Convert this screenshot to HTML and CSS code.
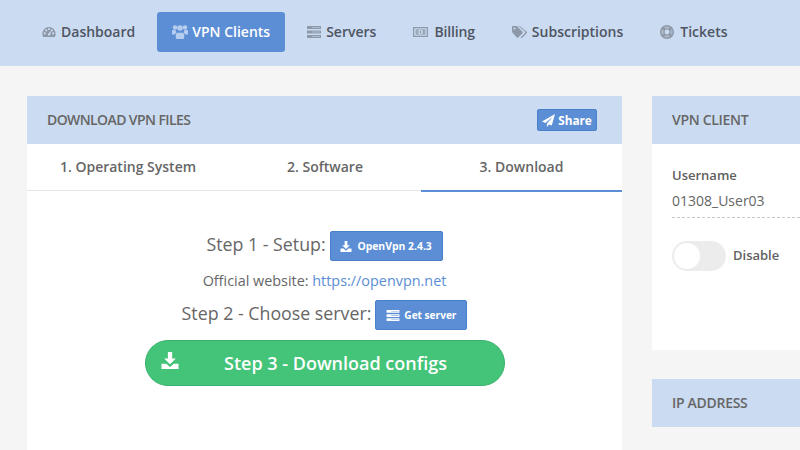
FILE: index.html
```html
<!DOCTYPE html>
<html lang="en">
<head>
<meta charset="UTF-8" />
<title>VPN Clients</title>
<link rel="stylesheet" href="styles.css">
</head>
<body>
<nav class="topnav">
    <a class="navitem" href="#">
        <svg class="navicon" viewBox="0 0 20 16"><path fill-rule="evenodd" d="M10 1a9.500 9.500 0 0 0-9.500 9.500c0 1.700.4 3.200 1.200 4.500h16.600c.8-1.300 1.200-2.800 1.200-4.500A9.500 9.500 0 0 0 10 1zM4 11.500a1.500 1.500 0 1 1 0-3 1.500 1.500 0 0 1 0 3zm2-4.300a1.500 1.500 0 1 1 0-3 1.500 1.500 0 0 1 0 3zm4-2a1.500 1.500 0 1 1 0-3 1.500 1.500 0 0 1 0 3zm1.300 7.800H8.700a2 2 0 0 1 .6-2.700l4.300-4.400-2.300 7.100zm2.700-5.800a1.500 1.500 0 1 1 0-3 1.500 1.500 0 0 1 0 3zm2 4.300a1.500 1.500 0 1 1 0-3 1.500 1.500 0 0 1 0 3z"/></svg>
        Dashboard
    </a>
    <a class="navitem active" href="#">
        <svg class="navicon icon-users" viewBox="0 0 16 14"><circle cx="3" cy="2.500" r="2.300"/><circle cx="13" cy="2.500" r="2.300"/><circle cx="8" cy="3" r="2.800"/><path d="M0 6c0-.6.400-1 1-1h2.800c-.2 1 .1 2 .8 2.700C3.600 8 3 8.800 2.900 9.500H1c-.6 0-1-.4-1-1zM16 6c0-.6-.4-1-1-1h-2.800c.2 1-.1 2-.8 2.700 1 .3 1.600 1.100 1.700 1.800H15c.6 0 1-.4 1-1z"/><path d="M3.800 10c0-1.200.8-2.300 2-2.300h4.400c1.200 0 2 1.100 2 2.300v2.400c0 .9-.7 1.600-1.600 1.600H5.400c-.9 0-1.600-.7-1.600-1.600z"/></svg>
        VPN Clients
    </a>
    <a class="navitem" href="#">
        <svg class="navicon" viewBox="0 0 14 12"><path d="M0 0h14v3H0zM0 4.500h14v3H0zM0 9h14v3H0z"/><path class="cut" d="M5 1h8v1H5zM5 5.500h8v1H5zM5 10h8v1H5z"/></svg>
        Servers
    </a>
    <a class="navitem icon-gap billing" href="#">
        <svg class="navicon icon-wide" viewBox="0 0 15 12"><path fill-rule="evenodd" d="M0 1h15v10H0zM1.200 2.200v7.600h12.600V2.200z"/><path fill-rule="evenodd" opacity=".75" d="M2.500 3.200h10v5.600h-10zM7.500 3.800a2.200 2.200 0 1 0 0 4.400 2.200 2.200 0 0 0 0-4.400z"/><path d="M6.800 4.800h1.300v2.500H6.800z"/></svg>
        Billing
    </a>
    <a class="navitem" href="#">
        <svg class="navicon icon-wide" viewBox="0 0 15 12"><path fill-rule="evenodd" d="M0 1c0-.6.400-1 1-1h3.800l5.700 5.800c.4.400.4 1 0 1.400l-4.300 4.400c-.4.400-1 .4-1.400 0L0 6zM2.500 3.500a1 1 0 1 0 0-2 1 1 0 0 0 0 2z"/><path d="M6.500 0h1.300l6.800 5.800c.5.400.5 1 0 1.400l-4.400 4.500c-.4.400-1 .4-1.400 0l-.2-.2 4.300-4.400c.4-.4.400-1.100 0-1.500z"/></svg>
        Subscriptions
    </a>
    <a class="navitem icon-gap" href="#">
        <svg class="navicon icon-buoy" viewBox="0 0 14 14"><circle class="buoy-band" cx="7" cy="7" r="5"/><circle class="buoy-edge" cx="7" cy="7" r="6.400"/><circle class="buoy-edge" cx="7" cy="7" r="3"/><path class="buoy-cross" d="M2.500 2.500l2.400 2.400M11.500 2.500L9.100 4.900M2.500 11.500l2.400-2.400M11.500 11.500L9.100 9.100"/></svg>
        Tickets
    </a>
</nav>

<main class="columns">
    <section class="card">
        <header class="cardhead">
            <h2 class="tight">DOWNLOAD VPN FILES</h2>
            <a class="btn btn-share" href="#">
                <svg class="btnicon" viewBox="0 0 16 16"><path d="M16 0 0 9.200l4.300 1.800L13.500 3 6 12v4l2.600-3.200 3.400 1.400z"/></svg>
                Share
            </a>
        </header>
        <ul class="tabs">
            <li>1. Operating System</li>
            <li>2. Software</li>
            <li class="current">3. Download</li>
        </ul>
        <div class="steps">
            <p class="stepline"><span class="steptext">Step 1 - Setup:</span>
                <a class="btn btn-step" href="#">
                    <svg class="btnicon" viewBox="0 0 16 16"><path d="M6 0h4v6h3.500L8 11.500 2.500 6H6z"/><path d="M0 11h4.500L8 14l3.500-3H16v5H0z"/></svg>
                    OpenVpn 2.4.3
                </a>
            </p>
            <p class="siteline">Official website: <a href="#">https://openvpn.net</a></p>
            <p class="stepline"><span class="steptext">Step 2 - Choose server:</span>
                <a class="btn btn-step" href="#">
                    <svg class="btnicon icon-server" viewBox="0 0 14 12"><path d="M0 0h14v3H0zM0 4.500h14v3H0zM0 9h14v3H0z"/><path class="cut" d="M5 5.500h8v1H5zM5 10h8v1H5zM5 1h8v1H5z"/></svg>
                    Get server
                </a>
            </p>
            <a class="btn-big" href="#">
                <svg class="bigicon" viewBox="0 0 16 16"><path d="M6 0h4v6h3.500L8 11.500 2.500 6H6z"/><path d="M0 11h4.500L8 14l3.500-3H16v5H0z"/></svg>
                Step 3 - Download configs
            </a>
        </div>
    </section>

    <aside class="side">
        <section class="card clientcard">
            <header class="cardhead"><h2>VPN CLIENT</h2></header>
            <div class="clientbody">
                <div class="fieldlabel">Username</div>
                <div class="fieldvalue">01308_User03</div>
                <div class="toggle-row">
                    <span class="toggle"><span class="knob"></span></span>
                    <span class="togglelabel">Disable</span>
                </div>
            </div>
        </section>
        <section class="card">
            <header class="cardhead"><h2>IP ADDRESS</h2></header>
        </section>
    </aside>
</main>
</body>
</html>
```

FILE: styles.css
```css
*{margin:0;padding:0;box-sizing:border-box;}
html,body{width:800px;height:450px;overflow:hidden;}
body{background:#f5f5f5;color:#5f5f5f;font:400 14px/1.4 "Open Sans","Noto Sans",sans-serif;}
a{text-decoration:none;}
ul{list-style-type:none;}

.topnav{display:flex;gap:7px;height:66px;padding:12px 0 0 27px;background:#cbdbf1;}
.navitem{display:flex;align-items:center;gap:5px;height:40px;padding:0 15px;border-radius:3px;color:#4e5563;font-size:14px;font-weight:600;}
.navitem.billing{letter-spacing:-.15px;}
.navicon{width:14px;height:12px;fill:#8d99a9;flex:none;}
.navicon .cut{fill:#cbdbf1;opacity:.55;}
.navicon.icon-users{width:16px;height:14px;}
.navicon.icon-wide{width:15px;}
.navicon.icon-buoy{width:14px;height:14px;}
.buoy-band{fill:none;stroke:#aab5c4;stroke-width:3;}
.buoy-edge{fill:none;stroke:#8d99a9;stroke-width:1.2;}
.buoy-cross{fill:none;stroke:#8d99a9;stroke-width:2.6;}
.navitem.icon-gap{gap:6px;}
.navitem.active{gap:4px;background:#5b8ed4;color:#fff;}
.navitem.active .navicon{fill:#b5cdee;}

.columns{display:grid;grid-template-columns:595px 148px;gap:30px;padding:30px 0 0 27px;width:800px;}
.card{background:#fff;}
.cardhead{display:flex;align-items:center;justify-content:space-between;height:48px;padding:0 25px 0 20px;background:#cbdbf1;}
.cardhead h2{color:#666;font-size:14px;font-weight:600;letter-spacing:-.3px;white-space:nowrap;}
.cardhead h2.tight{letter-spacing:-.6px;}

.btn{display:inline-flex;align-items:center;justify-content:center;background:#5b8ed4;border:1px solid #4a80cb;border-radius:2px;color:#fff;font-weight:700;}
.btn-share{gap:3px;width:60px;height:22px;font-size:11.800px;}
.btnicon{width:13px;height:13px;fill:#fff;flex:none;}
.btnicon .cut{fill:#5b8ed4;opacity:.5;}

.tabs{display:grid;grid-template-columns:202px 192px 1fr;height:47px;border-bottom:1px solid #e7e7e7;}
.tabs li{height:47px;line-height:46px;text-align:center;color:#666;font-size:14px;font-weight:600;}
.tabs li.current{height:48px;border-bottom:2px solid #5b8ed4;}

.steps{display:flex;flex-direction:column;align-items:center;height:260px;padding-top:39px;}
.stepline{display:flex;align-items:center;gap:4px;height:32px;color:#666;font-size:17.800px;}
.steptext{margin-bottom:3px;}
.btn-step{gap:5px;width:113px;height:30px;font-size:10.400px;}
.btn-step .btnicon{width:12px;height:11px;}
.btn-step .btnicon.icon-server{width:14px;height:11px;}
.stepline:nth-of-type(3) .btn-step{gap:4px;width:92px;font-size:10.100px;}
.siteline{height:37px;line-height:38px;color:#666;font-size:14.400px;}
.siteline a{color:#5b8ed4;}
.btn-big{position:relative;display:block;width:360px;height:46px;margin-top:9px;background:#43c479;border:1px solid #3ab06c;border-radius:23px;color:#fff;font-size:18px;font-weight:600;line-height:44px;text-align:center;padding-left:22px;}
.bigicon{position:absolute;left:15px;top:11px;width:18px;height:17px;fill:#fff;}

.side{display:flex;flex-direction:column;gap:29px;}
.clientcard{height:254px;}
.clientbody{padding:21px 0 0 20px;}
.fieldlabel{color:#5f5f5f;font-size:13px;font-weight:600;line-height:20px;}
.fieldvalue{height:33px;padding-top:6px;border-bottom:1px dashed #c8c8c8;color:#666;font-size:14px;line-height:20px;}
.toggle-row{display:flex;align-items:center;gap:7px;margin-top:23px;color:#5f5f5f;font-size:13px;font-weight:600;}
.togglelabel{margin-bottom:2px;}
.toggle{display:block;width:54px;height:30px;padding:2px;border-radius:15px;background:#ececec;}
.knob{display:block;width:26px;height:26px;border-radius:50%;background:#fff;}
```
